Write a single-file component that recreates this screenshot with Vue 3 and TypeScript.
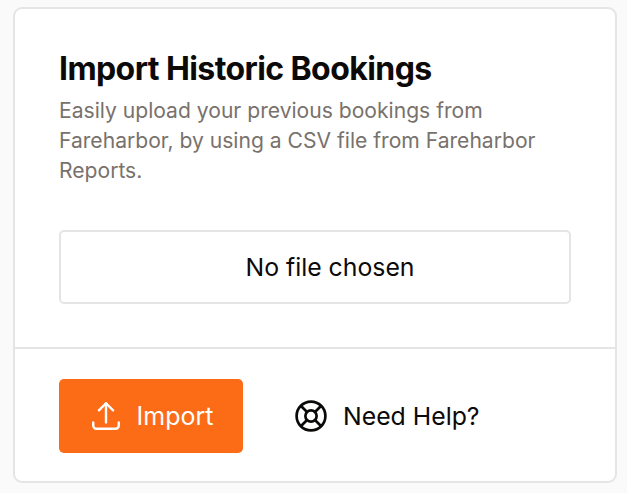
<script setup lang="ts">
const title = 'Import Historic Bookings'
</script>

<template>
  <div class="page">
    <section class="card">
      <div class="top">
        <h1 class="title">{{ title }}</h1>
        <p class="desc">Easily upload your previous bookings from Fareharbor, by using a CSV file from Fareharbor Reports.</p>
        <div class="file"><span class="file-label">No file chosen</span></div>
      </div>
      <div class="bottom">
        <button class="import" type="button">
          <svg width="34" height="34" viewBox="0 0 24 24" fill="none" stroke="currentColor" stroke-width="1.7" stroke-linecap="round" stroke-linejoin="round">
            <path d="M3 16.5v2.25A2.25 2.25 0 0 0 5.25 21h13.5A2.25 2.25 0 0 0 21 18.75V16.5" />
            <path d="M7 8 12 3l5 5" />
            <path d="M12 3v13.5" />
          </svg>
          <span>Import</span>
        </button>
        <a class="help">
          <svg width="36" height="36" viewBox="0 0 24 24" fill="none" stroke="currentColor" stroke-width="1.8">
            <circle cx="12" cy="12" r="9.6" />
            <circle cx="12" cy="12" r="3.75" />
            <path d="M5.2 5.2 9.35 9.35M18.8 5.2l-4.15 4.15M5.2 18.8l4.15-4.15M18.8 18.8l-4.15-4.15" />
          </svg>
          <span>Need Help?</span>
        </a>
      </div>
    </section>
  </div>
</template>

<style>
html, body { margin: 0; background: #fafafa; }
</style>

<style scoped>
.page {
  width: 627px;
  height: 493px;
  box-sizing: border-box;
  padding: 7px 10px 10px 13px;
  font-family: Inter, "Liberation Sans", sans-serif;
}
.card {
  box-sizing: border-box;
  height: 476px;
  background: #fff;
  border: 2px solid #e5e5e5;
  border-radius: 9px;
  display: flex;
  flex-direction: column;
}
.top {
  box-sizing: border-box;
  height: 340px;
  padding: 39px 44px 0 44px;
  border-bottom: 2px solid #e5e5e5;
}
.title {
  margin: 0;
  font-size: 32px;
  line-height: 42px;
  font-weight: 700;
  letter-spacing: -0.58px;
  color: #0c0a09;
}
.desc {
  margin: 6px 0 0;
  font-size: 21.1px;
  line-height: 30px;
  color: #78716c;
}
.file {
  box-sizing: border-box;
  margin-top: 44px;
  height: 74px;
  border: 2px solid #e5e5e5;
  border-radius: 5px;
  display: flex;
  align-items: center;
  justify-content: center;
  padding-left: 30px;
  font-size: 24.8px;
  color: #0c0a09;
}
.bottom {
  display: flex;
  align-items: center;
  gap: 50px;
  padding: 30px 44px 0;
}
.import {
  display: flex;
  align-items: center;
  justify-content: center;
  gap: 14px;
  width: 184px;
  height: 74px;
  background: #fc6b15;
  border: 0;
  border-radius: 5px;
  color: #fff;
  font: 400 25px Inter, "Liberation Sans", sans-serif;
  padding: 0;
}
.help {
  display: flex;
  align-items: center;
  gap: 14px;
  color: #0c0a09;
  font-size: 24.8px;
}
</style>
